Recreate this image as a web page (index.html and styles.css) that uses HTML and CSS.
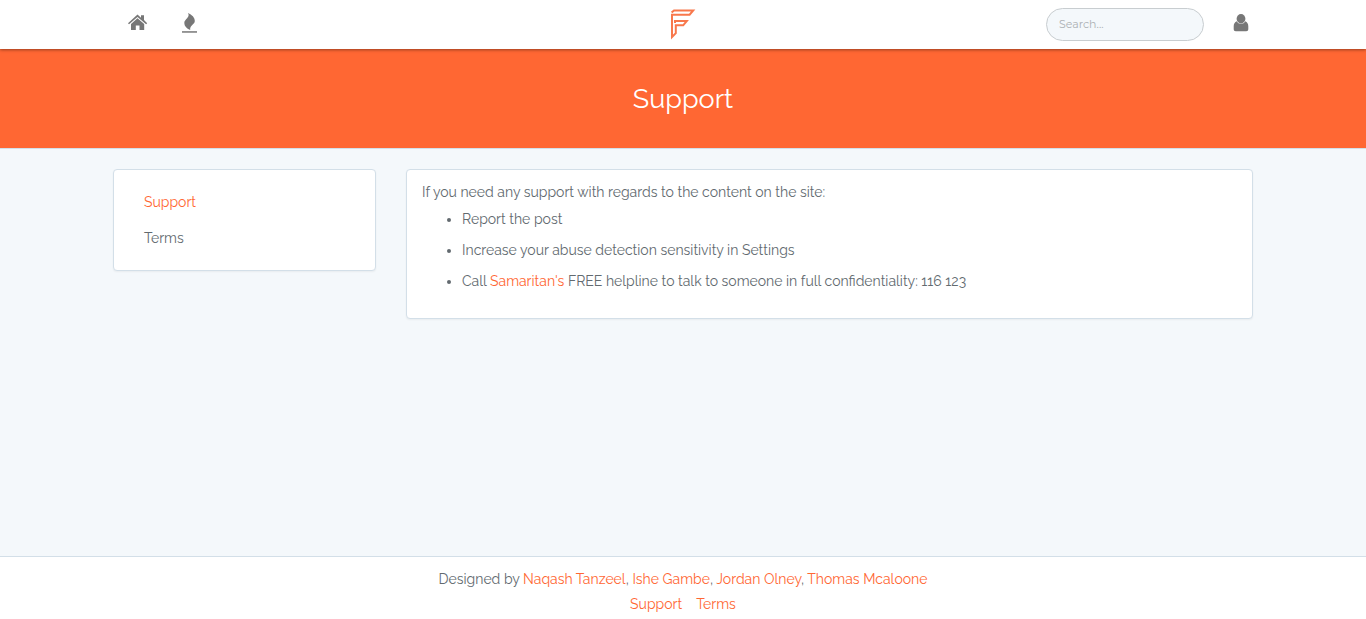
FILE: index.html
```html
<!DOCTYPE html>
<html lang="en">
<head>
<meta charset="utf-8">
<meta name="viewport" content="width=device-width, initial-scale=1">
<title>Support</title>
<link rel="stylesheet" href="styles.css">
</head>
<body>
<header class="topbar">
  <div class="container topbar-inner">
    <nav class="nav-left" aria-label="Main">
      <a class="icon-link" href="#home" aria-label="Home">
        <svg width="20" height="20" viewBox="0 0 20 20" fill="currentColor"><path d="M9.5 1.6 13 4.700V2.300H16V7L19.200 10.200 18.100 11.300 9.500 3.900 1 11.300 0 10.200Z"/><path d="M9.500 5.200 16.200 11V17H11.500V12.500H7.800V17H3V11Z"/></svg>
      </a>
      <a class="icon-link" href="#trending" aria-label="Trending">
        <svg width="20" height="20" viewBox="0 0 20 20" fill="currentColor"><path d="M8 0C12 1.800 14.800 4.500 14.800 8C14.800 11.500 9.600 12.200 10.200 17C6.500 15.500 4.300 13 4.300 10C4.300 6 10.600 4.500 8 0Z"/><path d="M2 18.200H17V19.700H2Z"/></svg>
      </a>
    </nav>
    <a class="logo" href="#home" aria-label="Home">
      <svg width="26" height="32" viewBox="0 0 26 32" fill="none" stroke="#f8784c" stroke-width="2"><path d="M1.600 4.600 4 2.400H23.200L19.600 6.700H2V29L5.800 25.200V17.300H13.200L16.800 13H5V15"/></svg>
    </a>
    <div class="nav-right">
      <form role="search"><input class="search" type="text" placeholder="Search..." aria-label="Search"></form>
      <a class="icon-link" href="#account" aria-label="Account">
        <svg width="20" height="20" viewBox="0 0 20 20" fill="currentColor"><ellipse cx="10" cy="5.800" rx="4.400" ry="4.700"/><path d="M5.800 8.300C6.500 10 8 10.800 10 10.800S13.500 10 14.200 8.300C16.300 9 17.300 11 17.300 13.200V16C17.300 17.300 16.500 18.300 15.200 18.300H4.800C3.500 18.300 2.700 17.300 2.700 16V13.200C2.700 11 3.700 9 5.800 8.300Z"/></svg>
      </a>
    </div>
  </div>
</header>
<section class="banner"><h1>Support</h1></section>
<main class="container content">
  <nav class="card side" aria-label="Help">
    <a class="active" href="#support">Support</a>
    <a href="#terms">Terms</a>
  </nav>
  <section class="card article">
    <p>If you need any support with regards to the content on the site:</p>
    <ul>
      <li>Report the post</li>
      <li>Increase your abuse detection sensitivity in Settings</li>
      <li>Call <a href="#samaritans">Samaritan's</a> FREE helpline to talk to someone in full confidentiality: 116 123</li>
    </ul>
  </section>
</main>
<footer class="footer">
  <p>Designed by <a href="#naqash">Naqash Tanzeel</a>, <a href="#ishe">Ishe Gambe</a>, <a href="#jordan">Jordan Olney</a>, <a href="#thomas">Thomas Mcaloone</a></p>
  <p class="footer-links"><a href="#support">Support</a><a href="#terms">Terms</a></p>
</footer>
</body>
</html>
```
FILE: styles.css
```css
* { box-sizing: border-box; }
body {
  margin: 0;
  min-height: 100vh;
  display: flex;
  flex-direction: column;
  background: #f4f8fb;
  color: #626a6f;
  font: 14px/25px Raleway, Lato, "Open Sans", sans-serif;
}
a { color: #ff6733; text-decoration: none; }
h1, p, ul { margin: 0; }
svg { display: block; }
.container {
  width: 100%;
  max-width: 1170px;
  margin: 0 auto;
  padding: 0 15px;
}
.topbar {
  position: relative;
  background: #fff;
  box-shadow: 0 1px 3px rgba(0, 0, 0, .4);
}
.topbar-inner {
  display: grid;
  grid-template-columns: 1fr auto 1fr;
  align-items: center;
  min-height: 49px;
}
.nav-left { display: flex; gap: 32px; padding: 0 15px 3px; }
.icon-link { color: #777; }
.logo { padding-bottom: 2px; }
.nav-right {
  display: flex;
  align-items: center;
  justify-content: flex-end;
  gap: 27px;
}
.nav-right .icon-link { padding: 0 2px 3px 0; }
.search {
  display: block;
  width: 158px;
  height: 33px;
  padding: 0 12px 1px;
  border: 1px solid #c8cdd0;
  border-radius: 17px;
  background: #f4f8fb;
  color: #626a6f;
  font: 11px Montserrat, Raleway, "Open Sans", sans-serif;
}
.search::placeholder { color: #acb1b4; opacity: 1; }
.banner {
  padding: 32px 15px;
  border-bottom: 1px solid #d3dfe8;
  background: #ff6733;
  color: #fff;
  text-align: center;
}
.banner h1 { font-size: 27px; line-height: 35px; font-weight: 400; }
.content {
  flex: 1;
  display: grid;
  grid-template-columns: 263px 1fr;
  gap: 30px;
  align-items: start;
  padding-top: 20px;
  padding-bottom: 20px;
}
.card {
  border: 1px solid #d3dfe8;
  border-radius: 4px;
  background: #fff;
  box-shadow: 0 1px 2px rgba(0, 0, 0, .05);
}
.side { display: flex; flex-direction: column; padding: 14px 15px; }
.side a { padding: 5px 15px; line-height: 26px; color: #626a6f; }
.side a.active { color: #ff6733; }
.article { padding: 10px 15px 20px; }
.article ul { padding-left: 40px; }
.article li { margin-bottom: 2px; line-height: 29px; }
.footer {
  padding: 10px 15px 2px;
  border-top: 1px solid #d3dfe8;
  background: #fff;
  text-align: center;
}
.footer-links { display: flex; justify-content: center; gap: 14px; }
```
